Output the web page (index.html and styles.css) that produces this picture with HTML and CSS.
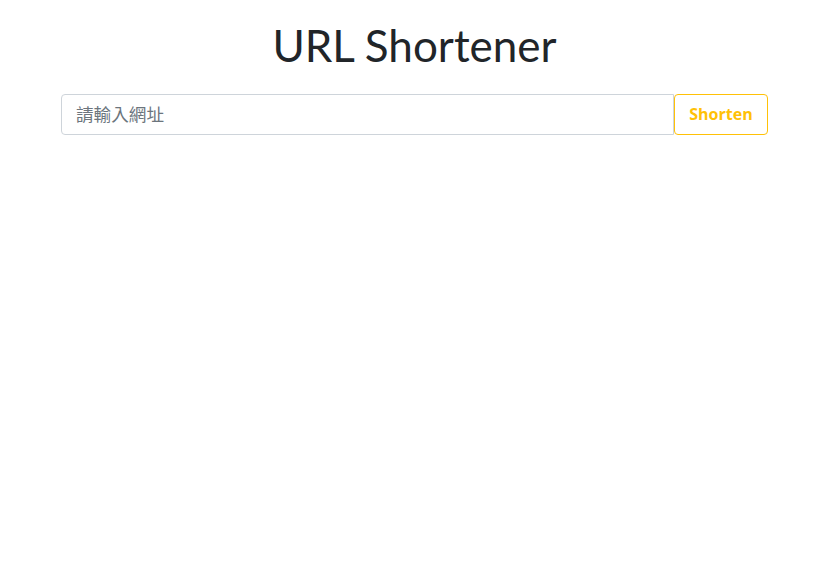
FILE: index.html
```html
<!DOCTYPE html>
<html lang="zh-Hant">
<head>
<meta charset="utf-8">
<title>URL Shortener</title>
<link rel="stylesheet" href="styles.css">
</head>
<body>
<main class="container">
  <h1 class="title">URL Shortener</h1>
  <form class="shorten-form" onsubmit="return false">
    <input class="url-input" type="text" placeholder="請輸入網址">
    <button class="btn-shorten" type="submit">Shorten</button>
  </form>
</main>
</body>
</html>
```
FILE: styles.css
```css
html, body {
  margin: 0;
  padding: 0;
  background: #ffffff;
}
body {
  font-family: Lato, "Noto Sans CJK TC", sans-serif;
  color: #212529;
  padding-right: 10px;
}
.container {
  width: 707px;
  margin: 0 auto;
  padding-top: 19px;
}
.title {
  margin: 0 0 22px;
  font-size: 44px;
  font-weight: 400;
  line-height: 1.2;
  text-align: center;
}
.shorten-form {
  display: flex;
  height: 41px;
}
.url-input {
  flex: 1;
  min-width: 0;
  box-sizing: border-box;
  height: 41px;
  padding: 6px 14px;
  border: 1px solid #ced4da;
  border-radius: 4px 0 0 4px;
  font-family: Lato, "Noto Sans CJK TC", sans-serif;
  font-size: 17.6px;
  color: #495057;
  outline: none;
}
.url-input::placeholder {
  color: #6c757d;
}
.btn-shorten {
  box-sizing: border-box;
  width: 94px;
  height: 41px;
  border: 1px solid #ffc107;
  border-radius: 4px;
  background: #fff;
  color: #ffc107;
  font-family: "Open Sans", sans-serif;
  font-weight: 700;
  font-size: 16px;
  cursor: pointer;
}
```
